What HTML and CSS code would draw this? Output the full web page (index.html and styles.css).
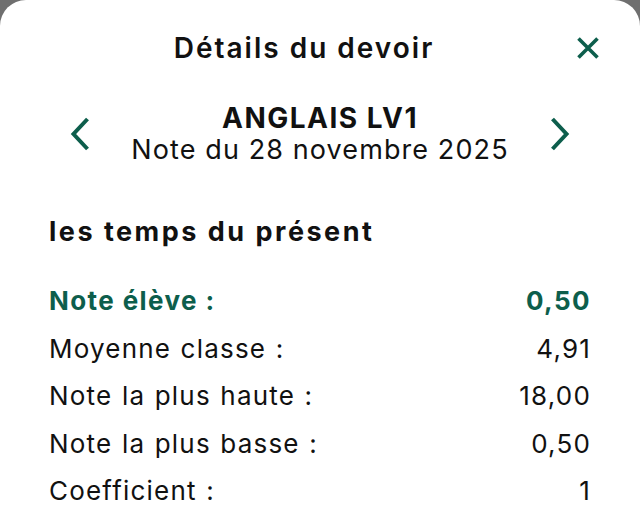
FILE: index.html
```html
<!DOCTYPE html>
<html lang="fr">
  <head>
    <meta charset="UTF-8" />
    <meta name="viewport" content="width=device-width, initial-scale=1.0" />
    <title>Détails du devoir</title>
    <link rel="stylesheet" href="styles.css">
  </head>
  <body>
    <div class="sheet">
      <div class="header">
        <div class="title">Détails du devoir</div>
        <button class="close" aria-label="Fermer">
          <svg width="24" height="24" viewBox="0 0 24 24">
            <path d="M2.5 2.5 L21.5 21.5 M21.5 2.5 L2.5 21.5" />
          </svg>
        </button>
      </div>

      <div class="nav">
        <button class="arrow" aria-label="Précédent">
          <svg width="24" height="36" viewBox="0 0 24 36">
            <polyline points="19.5,3 5.5,18 19.5,33" />
          </svg>
        </button>
        <div class="subject">
          <div class="name">ANGLAIS LV1</div>
          <div class="date">Note du 28 novembre 2025</div>
        </div>
        <button class="arrow" aria-label="Suivant">
          <svg width="24" height="36" viewBox="0 0 24 36">
            <polyline points="4.5,3 18.5,18 4.5,33" />
          </svg>
        </button>
      </div>

      <div class="content">
        <div class="topic">les temps du présent</div>
        <div class="rows">
          <div class="row main">
            <span>Note élève :</span>
            <span>0,50</span>
          </div>
          <div class="row">
            <span>Moyenne classe :</span>
            <span>4,91</span>
          </div>
          <div class="row">
            <span>Note la plus haute :</span>
            <span>18,00</span>
          </div>
          <div class="row">
            <span>Note la plus basse :</span>
            <span>0,50</span>
          </div>
          <div class="row">
            <span>Coefficient :</span>
            <span>1</span>
          </div>
        </div>
      </div>
    </div>
  </body>
</html>
```

FILE: styles.css
```css
* {
  margin: 0;
  padding: 0;
  box-sizing: border-box;
}

body {
  background: #6f6f6f;
  font-family: Inter, "Open Sans", sans-serif;
  color: #111;
}

.sheet {
  background: #fff;
  border-radius: 26px 26px 0 0;
  min-height: 100vh;
}

/* en-tete */
.header {
  display: grid;
  grid-template-columns: 1fr 56px;
  align-items: center;
  padding: 32px 24px 0 48px;
}

.header .title {
  text-align: center;
  font-size: 28px;
  line-height: 32px;
  font-weight: 600;
  letter-spacing: 2px;
}

button {
  border: none;
  background: none;
  display: flex;
  justify-content: center;
  align-items: center;
}

.close svg path {
  stroke: #0d5e4c;
  stroke-width: 3.6;
  fill: none;
}

/* matiere */
.nav {
  display: grid;
  grid-template-columns: 48px 1fr 48px;
  align-items: center;
  padding: 0 56px;
  margin-top: 38px;
}

.arrow svg polyline {
  stroke: #0d5e4c;
  stroke-width: 4;
  fill: none;
}

.subject {
  text-align: center;
}

.subject .name {
  font-size: 28px;
  line-height: 32px;
  font-weight: 700;
  letter-spacing: 1.5px;
}

.subject .date {
  font-size: 27px;
  line-height: 32px;
  font-weight: 400;
  letter-spacing: 1.1px;
}

/* notes */
.content {
  padding: 0 49px;
  margin-top: 50px;
}

.topic {
  font-size: 27px;
  line-height: 32px;
  font-weight: 700;
  letter-spacing: 2.5px;
}

.rows {
  margin-top: 29px;
}

.row {
  display: flex;
  justify-content: space-between;
  font-size: 26px;
  line-height: 47.5px;
  letter-spacing: 1.2px;
  word-spacing: 1px;
}

.row.main {
  color: #0d5e4c;
  font-weight: 700;
  letter-spacing: 1.4px;
  word-spacing: 0;
}
```
